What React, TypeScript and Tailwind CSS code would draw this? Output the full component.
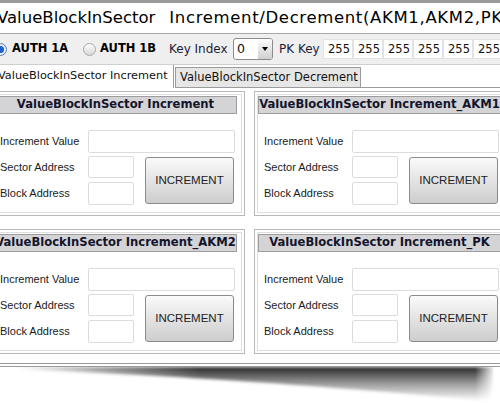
import React from "react";

const panelTitles = [
  "ValueBlockInSector Increment",
  "ValueBlockInSector Increment_AKM1",
  "ValueBlockInSector Increment_AKM2",
  "ValueBlockInSector Increment_PK",
];

const pkKeys = ["255", "255", "255", "255", "255", "255"];

function Field({ className }: { className: string }) {
  return <div className={`rounded-[2px] border border-[#dcdcdc] bg-white ${className}`} />;
}

function Radio({ checked }: { checked?: boolean }) {
  return checked ? (
    <div className="flex h-[13px] w-[13px] shrink-0 items-center justify-center rounded-full border border-[#5b7fb6] bg-[#e4ecf8]">
      <div className="h-[7px] w-[7px] rounded-full bg-[#1d5fc4]" />
    </div>
  ) : (
    <div className="h-[13px] w-[13px] shrink-0 rounded-full border border-[#a9a9a9] bg-linear-to-b from-[#ffffff] to-[#d6d6d6]" />
  );
}

function IncrementPanel({ title }: { title: string }) {
  return (
    <div className="h-[125px] w-[255px] border border-[#b9b9b9] bg-white p-[2px]">
      <div className="h-full border border-[#dedede] pt-px pr-[4px]">
        <div className="flex h-[18px] items-center justify-center whitespace-nowrap border border-[#9d9d9d] bg-[#d4d4d7] font-['DejaVu_Sans',Verdana,sans-serif] text-[11.6px] font-bold text-[#14142b]">
          {title}
        </div>
        <div className="pl-[6px] font-['Liberation_Sans',Arial,sans-serif] text-[11px] text-[#1a1a1a]">
          <div className="mt-[16px] flex items-center">
            <span className="w-[88px] shrink-0">Increment Value</span>
            <Field className="h-[23px] w-[147px] shrink-0" />
          </div>
          <div className="mt-[3px] flex items-start">
            <div className="flex flex-col">
              <div className="flex items-center">
                <span className="w-[88px] shrink-0">Sector Address</span>
                <Field className="h-[22px] w-[46px] shrink-0" />
              </div>
              <div className="mt-[4px] flex items-center">
                <span className="w-[88px] shrink-0">Block Address</span>
                <Field className="h-[23px] w-[46px] shrink-0" />
              </div>
            </div>
            <button className="mt-px ml-[11px] h-[47px] w-[89px] shrink-0 rounded-[3px] border border-[#8b8b8b] bg-linear-to-b from-[#fafafa] to-[#cdcdcd] font-['Liberation_Sans',Arial,sans-serif] text-[11.5px] text-[#222]">
              INCREMENT
            </button>
          </div>
        </div>
      </div>
    </div>
  );
}

function App() {
  return (
    <div className="h-[403px] w-[500px] overflow-hidden bg-white font-['DejaVu_Sans',Verdana,sans-serif] text-[#111]">
      <div className="h-[3px] bg-[#9a9a9a]" />

      {/* title */}
      <div className="flex h-[31px] items-center border-b border-[#a8a8a8] whitespace-nowrap text-[16.5px] text-black">
        <span className="-ml-[3px]">ValueBlockInSector</span>
        <span className="ml-[14px] tracking-[0.65px]">Increment/Decrement(AKM1,AKM2,PK)</span>
      </div>

      {/* auth / key row */}
      <div className="flex h-[31px] items-center border-b border-[#cfcfcf] bg-[#efefef] whitespace-nowrap">
        <div className="-ml-[6px] flex items-center">
          <Radio checked />
          <span className="ml-[5px] w-[71px] shrink-0 text-[11.5px] font-bold text-black">AUTH 1A</span>
          <Radio />
          <span className="ml-[4px] w-[69px] shrink-0 text-[11.5px] font-bold text-black">AUTH 1B</span>
          <span className="w-[64px] shrink-0 text-[12px] text-[#1c1c3a]">Key Index</span>
          <div className="flex h-[22px] w-[40px] shrink-0 items-stretch overflow-hidden rounded-[3px] border border-[#8c8c8c] bg-white">
            <span className="flex-1 pl-[3px] text-[12.5px] leading-[20px]">0</span>
            <div className="flex w-[14px] items-center justify-center bg-linear-to-b from-[#fdfdfd] to-[#cfcfcf]">
              <div className="h-0 w-0 border-x-[3.5px] border-t-[4px] border-x-transparent border-t-black" />
            </div>
          </div>
          <span className="ml-[6px] w-[44px] shrink-0 text-[12px] text-[#1c1c3a]">PK Key</span>
          {pkKeys.map((k, i) => (
            <div
              key={i}
              className="h-[20px] w-[30px] shrink-0 border border-[#e2e2e2] bg-white pl-[4px] text-[11.5px] leading-[18px]"
            >
              {k}
            </div>
          ))}
        </div>
      </div>

      {/* tabs */}
      <div className="flex h-[23px] items-end whitespace-nowrap text-[11.3px]">
        <div className="h-full w-[174px] shrink-0 border-r border-[#9c9c9c] bg-white leading-[22px]">
          <span className="-ml-[2px]">ValueBlockInSector Increment</span>
        </div>
        <div className="ml-px h-[21px] w-[186px] shrink-0 border border-[#9c9c9c] bg-[#e6e6e6] pl-[4px] text-[11.5px] leading-[19px]">
          ValueBlockInSector Decrement
        </div>
        <div className="h-full flex-1 border-b border-[#9c9c9c]" />
      </div>

      {/* tab content */}
      <div className="border-b-4 border-double border-[#9a9a9a] pt-[3px] pb-[9px]">
        <div className="-ml-[10px] grid w-[519px] grid-cols-[255px_255px] gap-x-[9px] gap-y-[13px]">
          {panelTitles.map((t) => (
            <IncrementPanel key={t} title={t} />
          ))}
        </div>
      </div>

      {/* curved drop shadow */}
      <svg width="500" height="40" viewBox="0 0 500 40" className="block">
        <defs>
          <linearGradient id="shade" x1="0" y1="0" x2="0" y2="1">
            <stop offset="0" stopColor="#262626" />
            <stop offset="0.45" stopColor="#939393" />
            <stop offset="1" stopColor="#ffffff" />
          </linearGradient>
          <linearGradient id="fade" x1="0" y1="0" x2="1" y2="0">
            <stop offset="0.03" stopColor="#fff" stopOpacity="0" />
            <stop offset="0.4" stopColor="#fff" stopOpacity="1" />
            <stop offset="0.95" stopColor="#fff" stopOpacity="1" />
            <stop offset="0.99" stopColor="#fff" stopOpacity="0" />
          </linearGradient>
          <mask id="fadeMask">
            <rect x="0" y="0" width="500" height="40" fill="url(#fade)" />
          </mask>
          <filter id="soft">
            <feGaussianBlur stdDeviation="1.6" />
          </filter>
        </defs>
        <path
          d="M16 0 L494 0 C495 12 493 24 488 34 C400 26 250 12 16 2 Z"
          fill="url(#shade)"
          filter="url(#soft)"
          mask="url(#fadeMask)"
        />
      </svg>
    </div>
  );
}

export default App;
